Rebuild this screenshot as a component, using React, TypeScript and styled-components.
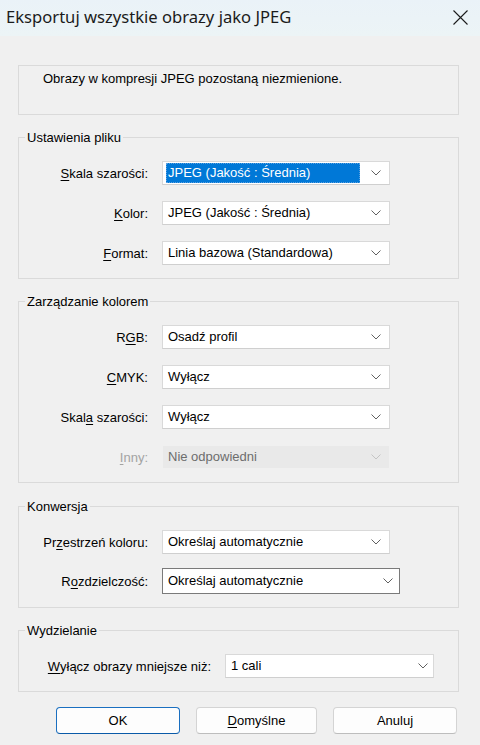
import React from 'react';
import styled, { createGlobalStyle } from 'styled-components';

const GlobalStyle = createGlobalStyle`
  html, body {
    margin: 0;
    padding: 0;
    background: #f0f0f0;
  }
  * {
    box-sizing: border-box;
  }
`;

const Dialog = styled.div`
  width: 480px;
  height: 745px;
  background: #f0f0f0;
  display: flex;
  flex-direction: column;
  font-family: 'Liberation Sans', Arial, sans-serif;
  font-size: 13px;
  color: #000;
  overflow: hidden;
`;

const TitleBar = styled.div`
  height: 36px;
  flex: none;
  display: flex;
  align-items: center;
  justify-content: space-between;
  padding: 0 12px 3px 6px;
  background: linear-gradient(#eaf2f8, #ecf4f6);
`;

const Title = styled.div`
  font-family: 'Noto Sans', 'Open Sans', sans-serif;
  font-size: 16.6px;
  color: #1b1b1b;
`;

const CloseButton = styled.div`
  width: 16px;
  height: 16px;
  display: flex;
  align-items: center;
  justify-content: center;
  margin-top: 2px;
`;

const Body = styled.div`
  padding: 0 21px 0 18px;
  display: flex;
  flex-direction: column;
`;

const InfoBox = styled.div`
  margin-top: 29px;
  height: 50px;
  border: 1px solid #dadada;
  padding: 5px 0 0 24px;
  line-height: 15px;
`;

const Group = styled.fieldset<{ $gap?: number }>`
  margin: ${p => p.$gap ?? 15}px 0 0;
  padding: 16px 0 13px;
  border: 1px solid #dadada;
  min-width: 0;
`;

const Legend = styled.legend`
  margin-left: 6px;
  padding: 0 2px;
  line-height: 15px;
  font-size: 13px;
`;

const Rows = styled.div<{ $labelWidth: number; $rowGap?: number }>`
  display: grid;
  grid-template-columns: ${p => p.$labelWidth}px auto;
  column-gap: 14px;
  row-gap: ${p => p.$rowGap ?? 16}px;
  align-items: center;
  justify-content: start;
`;

const Label = styled.label<{ $disabled?: boolean }>`
  text-align: right;
  color: ${p => (p.$disabled ? '#a3a3a3' : '#000')};
  white-space: nowrap;
  line-height: 15px;
`;

const Key = styled.span`
  text-decoration: underline;
  text-underline-offset: 2px;
`;

const Combo = styled.div<{ $width: number; $strong?: boolean; $disabled?: boolean }>`
  width: ${p => p.$width}px;
  height: ${p => (p.$strong ? 26 : 24)}px;
  display: flex;
  align-items: center;
  padding-left: 3px;
  background: ${p => (p.$disabled ? '#e9e9e9' : '#fff')};
  border: 1px solid
    ${p => (p.$disabled ? '#f0f0f0' : p.$strong ? '#7a7a7a' : '#d9d9d9')};
  border-bottom-color: ${p => (p.$disabled ? '#f0f0f0' : p.$strong ? '#7a7a7a' : '#cfcfcf')};
  color: ${p => (p.$disabled ? '#6d6d6d' : '#000')};
`;

const Value = styled.div<{ $selected?: boolean }>`
  flex: 1;
  height: 20px;
  line-height: 18px;
  padding-left: 1px;
  white-space: nowrap;
  background: ${p => (p.$selected ? '#0078d7' : 'transparent')};
  color: ${p => (p.$selected ? '#fff' : 'inherit')};
  border: 1px ${p => (p.$selected ? 'dotted #5aa0e0' : 'solid transparent')};
`;

const Chevron = styled.svg<{ $right: number }>`
  flex: none;
  margin-left: 11px;
  margin-right: ${p => p.$right}px;
`;

const ButtonRow = styled.div`
  margin-top: 15px;
  padding-left: 38px;
  display: grid;
  grid-template-columns: 124px 121px 124px;
  column-gap: 16px;
`;

const Button = styled.button<{ $primary?: boolean }>`
  height: 27px;
  font-family: 'Liberation Sans', Arial, sans-serif;
  font-size: 13px;
  color: #000;
  background: #fdfdfd;
  border-radius: 4px;
  border: 1px solid ${p => (p.$primary ? '#1a6fc0' : '#d4d4d4')};
  border-bottom-color: ${p => (p.$primary ? '#0a5aa8' : '#bdbdbd')};
  padding: 0;
`;

interface SelectProps {
  value: string;
  width?: number;
  strong?: boolean;
  disabled?: boolean;
  selected?: boolean;
  chevronRight?: number;
}

const Select: React.FC<SelectProps> = ({
  value,
  width = 228,
  strong,
  disabled,
  selected,
  chevronRight = 8,
}) => (
  <Combo $width={width} $strong={strong} $disabled={disabled} role="combobox">
    <Value $selected={selected}>{value}</Value>
    <Chevron $right={chevronRight} width="10" height="6" viewBox="0 0 10 6">
      <polyline
        points="0.5,0.5 5,5 9.5,0.5"
        fill="none"
        stroke={disabled ? '#c4c4c4' : '#606060'}
        strokeWidth="1"
      />
    </Chevron>
  </Combo>
);

export default function App() {
  return (
    <>
      <GlobalStyle />
      <Dialog>
        <TitleBar>
          <Title>Eksportuj wszystkie obrazy jako JPEG</Title>
          <CloseButton>
            <svg width="15" height="15" viewBox="0 0 15 15">
              <path d="M0.5 0.5 L14.5 14.5 M14.5 0.5 L0.5 14.5" stroke="#1b1b1b" strokeWidth="1.1" />
            </svg>
          </CloseButton>
        </TitleBar>

        <Body>
          <InfoBox>Obrazy w kompresji JPEG pozostaną niezmienione.</InfoBox>

          <Group>
            <Legend>Ustawienia pliku</Legend>
            <Rows $labelWidth={129}>
              <Label>
                <Key>S</Key>kala szarości:
              </Label>
              <Select value="JPEG (Jakość : Średnia)" selected />
              <Label>
                <Key>K</Key>olor:
              </Label>
              <Select value="JPEG (Jakość : Średnia)" />
              <Label>
                <Key>F</Key>ormat:
              </Label>
              <Select value="Linia bazowa (Standardowa)" />
            </Rows>
          </Group>

          <Group>
            <Legend>Zarządzanie kolorem</Legend>
            <Rows $labelWidth={129}>
              <Label>
                R<Key>G</Key>B:
              </Label>
              <Select value="Osadź profil" />
              <Label>
                <Key>C</Key>MYK:
              </Label>
              <Select value="Wyłącz" />
              <Label>
                Skal<Key>a</Key> szarości:
              </Label>
              <Select value="Wyłącz" />
              <Label $disabled>
                <Key>I</Key>nny:
              </Label>
              <Select value="Nie odpowiedni" disabled />
            </Rows>
          </Group>

          <Group $gap={16}>
            <Legend>Konwersja</Legend>
            <Rows $labelWidth={129} $rowGap={14}>
              <Label>
                Pr<Key>z</Key>estrzeń koloru:
              </Label>
              <Select value="Określaj automatycznie" />
              <Label>
                R<Key>o</Key>zdzielczość:
              </Label>
              <Select value="Określaj automatycznie" width={238} strong chevronRight={6} />
            </Rows>
          </Group>

          <Group>
            <Legend>Wydzielanie</Legend>
            <Rows $labelWidth={192}>
              <Label>
                <Key>W</Key>yłącz obrazy mniejsze niż:
              </Label>
              <Select value="1 cali" width={209} chevronRight={5} />
            </Rows>
          </Group>

          <ButtonRow>
            <Button $primary>OK</Button>
            <Button>
              <Key>D</Key>omyślne
            </Button>
            <Button>Anuluj</Button>
          </ButtonRow>
        </Body>
      </Dialog>
    </>
  );
}
